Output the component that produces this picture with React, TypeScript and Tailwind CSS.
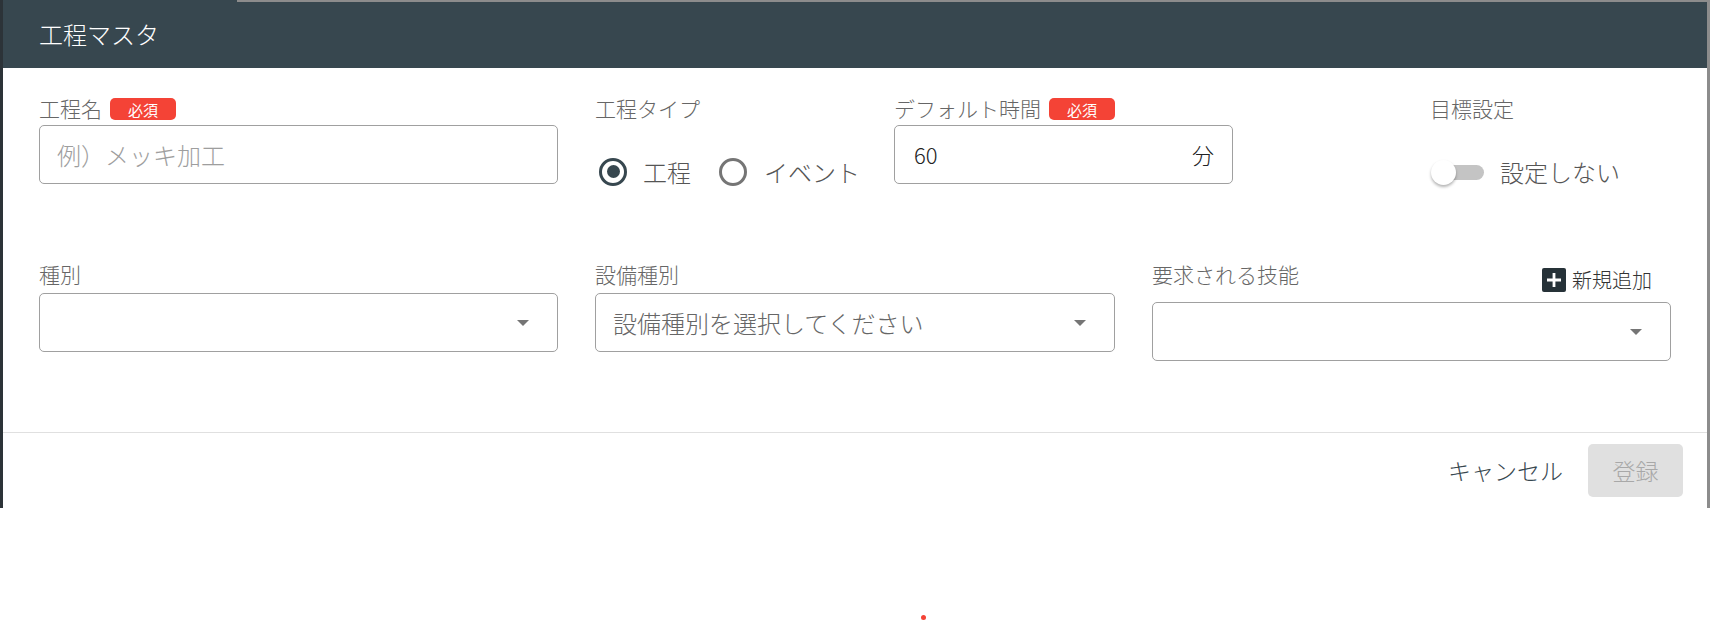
import React from "react";

const font = { fontFamily: '"Noto Sans CJK JP", "Noto Sans", sans-serif' };

const Badge = () => (
  <span className="ml-[8px] inline-flex h-[22px] w-[66px] items-center justify-center rounded-[5px] bg-[#f44336] text-[15px] font-normal leading-none text-white">
    必須
  </span>
);

const Arrow = () => (
  <svg width="12" height="6" viewBox="0 0 12 6" className="shrink-0">
    <path d="M0 0 L12 0 L6 6 Z" fill="#757575" />
  </svg>
);

const SelectBox = ({ text }: { text?: string }) => (
  <div className="flex h-[59px] items-center justify-between rounded-[5px] border border-[#a0a0a0] pl-[17px] pr-[28px]">
    <span className="text-[24px] text-[#666]">{text}</span>
    <Arrow />
  </div>
);

export default function App() {
  return (
    <div className="relative w-[1710px] bg-white font-light" style={font}>
      {/* dialog */}
      <div className="relative border-l-[3px] border-r-[3px] border-l-[#2c3338] border-r-[#8c8c8c] bg-white">
        <div className="absolute left-[234px] right-0 top-0 h-[2px] bg-[#8c8c8c]" />
        {/* header */}
        <div className="flex h-[68px] items-center bg-[#37474f] pl-[36px] text-[24px] text-white">
          工程マスタ
        </div>

        {/* body */}
        <div className="px-[36px] pb-[71px] pt-[26px]">
          {/* row 1 */}
          <div className="flex">
            <div className="w-[519px] shrink-0">
              <div className="flex h-[30px] items-center text-[21px] text-[#666]">
                工程名
                <Badge />
              </div>
              <div className="mt-[1px] flex h-[59px] items-center rounded-[5px] border border-[#a0a0a0] px-[17px] text-[24px] text-[#9e9e9e]">
                例）メッキ加工
              </div>
            </div>

            <div className="ml-[37px] w-[262px] shrink-0">
              <div className="flex h-[30px] items-center text-[21px] text-[#666]">工程タイプ</div>
              <div className="mt-[1px] flex h-[59px] items-center whitespace-nowrap pl-[4px] pt-[34px] text-[24px] text-[#555]">
                <span className="flex h-[28px] w-[28px] shrink-0 items-center justify-center rounded-full border-[3px] border-[#37474f]">
                  <span className="h-[13px] w-[13px] rounded-full bg-[#37474f]" />
                </span>
                <span className="ml-[16px] shrink-0">工程</span>
                <span className="ml-[28px] h-[28px] w-[28px] shrink-0 rounded-full border-[3px] border-[#757575]" />
                <span className="ml-[17px] shrink-0">イベント</span>
              </div>
            </div>

            <div className="ml-[37px] w-[339px] shrink-0">
              <div className="flex h-[30px] items-center text-[21px] text-[#666]">
                デフォルト時間
                <Badge />
              </div>
              <div className="mt-[1px] flex h-[59px] items-center justify-between rounded-[5px] border border-[#a0a0a0] pl-[19px] pr-[18px] text-[22px] text-[#222]">
                <span>60</span>
                <span>分</span>
              </div>
            </div>

            <div className="ml-[197px]">
              <div className="flex h-[30px] items-center text-[21px] text-[#666]">目標設定</div>
              <div className="mt-[1px] flex h-[59px] items-center pt-[34px]">
                <div className="relative h-[26px] w-[56px]">
                  <div className="absolute left-[6px] top-[6px] h-[15px] w-[48px] rounded-full bg-[#c4c4c4]" />
                  <div className="absolute left-[1px] top-[1px] h-[25px] w-[25px] rounded-full bg-white shadow-[0_2px_3px_rgba(0,0,0,0.3)]" />
                </div>
                <span className="ml-[14px] whitespace-nowrap text-[24px] text-[#555]">設定しない</span>
              </div>
            </div>
          </div>

          {/* row 2 */}
          <div className="mt-[76px] flex gap-[37px]">
            <div className="w-[519px]">
              <div className="flex h-[30px] items-center text-[21px] text-[#666]">種別</div>
              <div className="mt-[3px]">
                <SelectBox />
              </div>
            </div>
            <div className="w-[520px]">
              <div className="flex h-[30px] items-center text-[21px] text-[#666]">設備種別</div>
              <div className="mt-[3px]">
                <SelectBox text="設備種別を選択してください" />
              </div>
            </div>
            <div className="w-[519px]">
              <div className="flex h-[30px] items-center justify-between text-[21px] text-[#666]">
                <span>要求される技能</span>
                <span className="mr-[19px] mt-[10px] flex items-center text-[20px] text-[#333]">
                  <span className="flex h-[24px] w-[24px] items-center justify-center rounded-[2px] bg-[#263238]">
                    <svg width="16" height="16" viewBox="0 0 16 16">
                      <path d="M8 1 V15 M1 8 H15" stroke="white" strokeWidth="2.8" />
                    </svg>
                  </span>
                  <span className="ml-[6px]">新規追加</span>
                </span>
              </div>
              <div className="mt-[12px]">
                <SelectBox />
              </div>
            </div>
          </div>
        </div>

        {/* footer */}
        <div className="flex h-[76px] items-center justify-end border-t border-[#e0e0e0] pr-[24px]">
          <span className="text-[23px] text-[#37474f]">キャンセル</span>
          <span className="ml-[25px] flex h-[53px] w-[95px] items-center justify-center rounded-[5px] bg-[#e0e0e0] text-[23px] text-[#a8a8a8]">
            登録
          </span>
        </div>
      </div>

      <div className="ml-[921px] mt-[107px] h-[5px] w-[5px] rounded-full bg-[#f44336]" />
      <div className="h-[2px]" />
    </div>
  );
}
